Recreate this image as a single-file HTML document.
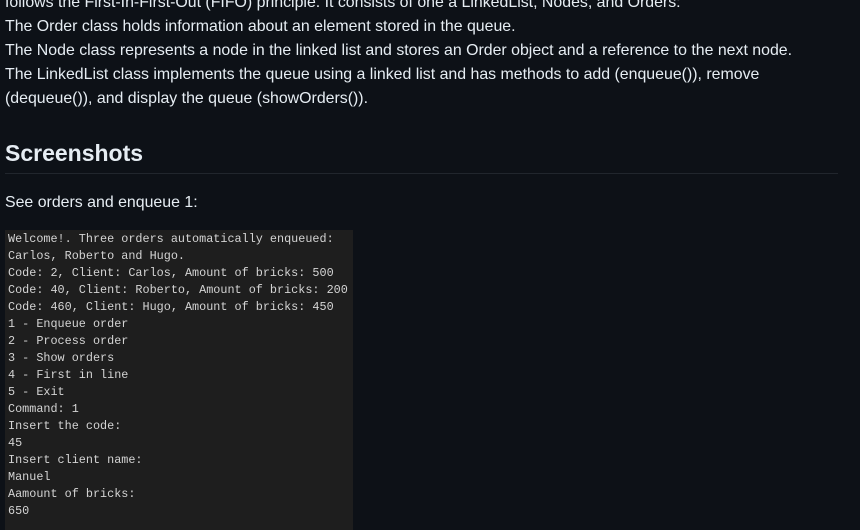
<!DOCTYPE html><html><head><style>
body{margin:0;background:#0d1117;color:#e6edf3;font-family:"Liberation Sans",sans-serif;width:860px;height:520px;overflow:hidden;position:relative}
.p{position:absolute;left:5px;top:-9px;font-size:15.9px;line-height:24px;width:845px}
h2{position:absolute;left:5px;top:136px;margin:0;font-size:23px;font-weight:600;line-height:34px}
.hr{position:absolute;left:5px;top:173px;width:833px;height:1px;background:#21262d}
.s{position:absolute;left:5px;top:191px;font-size:15.9px;line-height:24px}
.img{position:absolute;left:5px;top:230px;width:348px;height:300px;background:#1e1e1e}
pre{margin:0;position:absolute;left:3px;top:1px;font-family:"Liberation Mono",monospace;font-size:11.8px;line-height:17px;color:#d4d4d4}
</style></head><body>
<div class="p">follows the First-In-First-Out (FIFO) principle. It consists of one a LinkedList, Nodes, and Orders:<br>The Order class holds information about an element stored in the queue.<br>The Node class represents a node in the linked list and stores an Order object and a reference to the next node.<br>The LinkedList class implements the queue using a linked list and has methods to add (enqueue()), remove<br>(dequeue()), and display the queue (showOrders()).</div>
<h2>Screenshots</h2><div class="hr"></div>
<div class="s">See orders and enqueue 1:</div>
<div class="img"><pre>Welcome!. Three orders automatically enqueued:
Carlos, Roberto and Hugo.
Code: 2, Client: Carlos, Amount of bricks: 500
Code: 40, Client: Roberto, Amount of bricks: 200
Code: 460, Client: Hugo, Amount of bricks: 450
1 - Enqueue order
2 - Process order
3 - Show orders
4 - First in line
5 - Exit
Command: 1
Insert the code:
45
Insert client name:
Manuel
Aamount of bricks:
650</pre></div>
</body></html>
